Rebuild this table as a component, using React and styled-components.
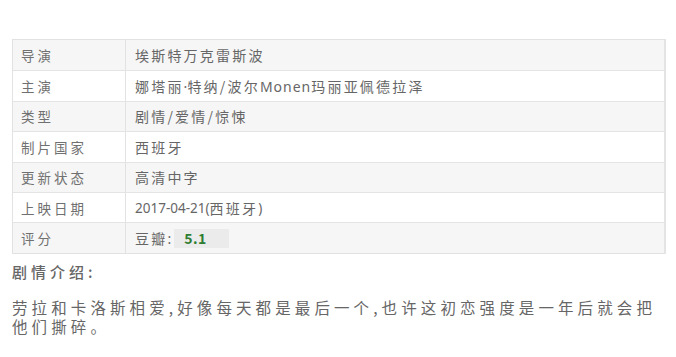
import React from "react";
import styled, { createGlobalStyle } from "styled-components";

const Global = createGlobalStyle`
  html, body { margin: 0; padding: 0; background: #fff; }
  body { font-family: "Noto Sans CJK SC", "Noto Sans", sans-serif; color: #666; }
`;

const Page = styled.div`
  width: 676px;
  height: 357px;
  padding: 39px 0 0 12px;
  box-sizing: border-box;
  overflow: hidden;
`;

const Table = styled.div`
  width: 654px;
  border: 1px solid #e2e2e2;
  border-right: 2px solid #e4e4e4;
  box-sizing: border-box;
  display: flex;
  flex-direction: column;
`;

const Row = styled.div`
  display: flex;
  height: 30.4px;
  box-sizing: border-box;
  border-top: ${p => (p.$first ? "none" : "1px solid #e4e4e4")};
  background: ${p => (p.$shade ? "#f6f6f6" : "#fff")};
  align-items: stretch;
`;

const Label = styled.div`
  width: 113px;
  box-sizing: border-box;
  flex: none;
  padding-left: 8px;
  border-right: 1px solid #e2e2e2;
  display: flex;
  align-items: center;
  font-size: 13.5px;
  letter-spacing: 3px;
  color: #707070;
`;

const Value = styled.div`
  flex: 1;
  padding-left: 9px;
  display: flex;
  align-items: center;
  font-size: 14px;
  letter-spacing: 2.2px;
  color: #666;
  white-space: nowrap;
`;

const Latin = styled.span`
  font-family: "Noto Sans", sans-serif;
  letter-spacing: ${p => p.$ls || "0"};
  font-size: ${p => p.$fs || "14px"};
`;

const Score = styled.span`
  display: inline-flex;
  align-items: center;
  margin-left: 3px;
  width: 55px;
  height: 19px;
  padding-left: 10px;
  box-sizing: border-box;
  background: #ebebeb;
  color: #2f7d32;
  font-weight: 700;
  font-size: 14px;
  letter-spacing: 0.5px;
`;

const Heading = styled.div`
  margin-top: 8px;
  font-size: 15px;
  letter-spacing: 4px;
  color: #666;
  font-weight: 500;
  line-height: 20px;
`;

const Para = styled.p`
  margin: 16px 0 0 0;
  font-size: 15.5px;
  letter-spacing: 4.1px;
  line-height: 19px;
  color: #666;
  width: 658px;
`;

const rows = [
  ["导演", "埃斯特万克雷斯波"],
  ["主演", <>娜塔丽<Latin>·</Latin>特纳/波尔<Latin $ls="1px">Monen</Latin>玛丽亚佩德拉泽</>],
  ["类型", "剧情/爱情/惊悚"],
  ["制片国家", "西班牙"],
  ["更新状态", "高清中字"],
  ["上映日期", <><Latin $fs="13.5px">2017-04-21(</Latin>西班牙<Latin $fs="13.5px">)</Latin></>],
  ["评分", <>豆瓣<Latin>:</Latin><Score>5.1</Score></>],
];

export default function App() {
  return (
    <>
      <Global />
      <Page>
        <Table>
          {rows.map(([k, v], i) => (
            <Row key={k} $first={i === 0} $shade={i % 2 === 0}>
              <Label>{k}</Label>
              <Value>{v}</Value>
            </Row>
          ))}
        </Table>
        <Heading>剧情介绍:</Heading>
        <Para>
          劳拉和卡洛斯相爱,好像每天都是最后一个,也许这初恋强度是一年后就会把他们撕碎。
        </Para>
      </Page>
    </>
  );
}
